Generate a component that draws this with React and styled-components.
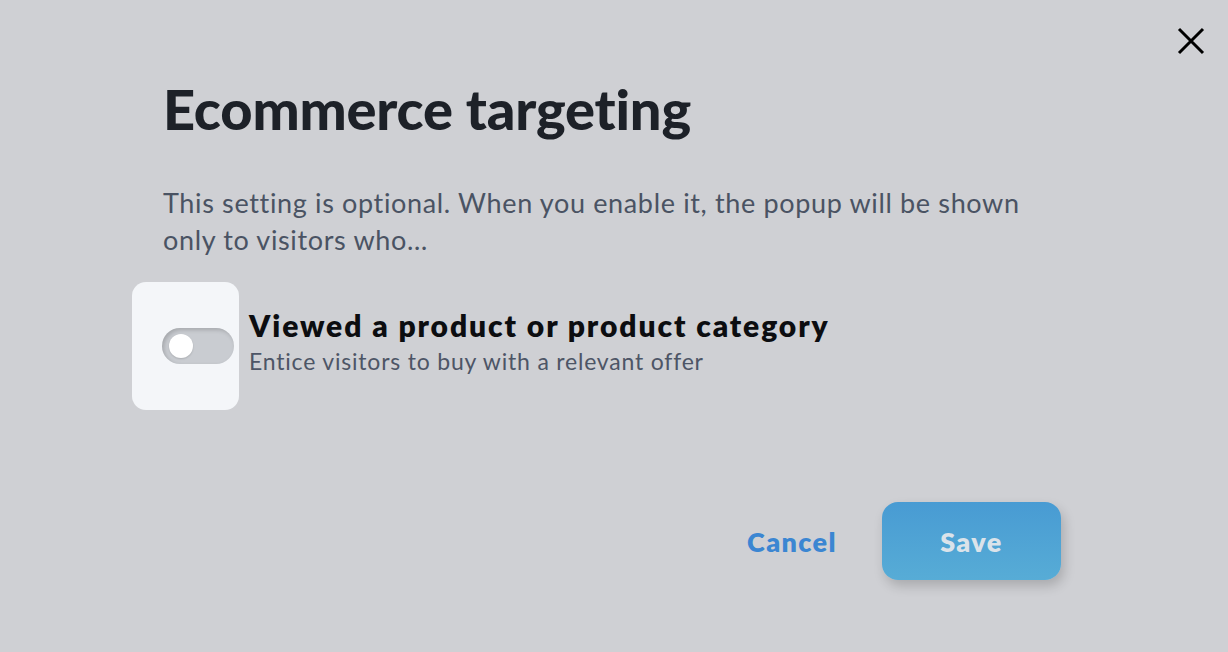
import React, { useState } from "react";
import styled, { createGlobalStyle } from "styled-components";

const GlobalStyle = createGlobalStyle`
  html, body {
    margin: 0;
    padding: 0;
    background: #cfd0d4;
  }
  * {
    box-sizing: border-box;
  }
`;

const Page = styled.div`
  position: relative;
  min-height: 652px;
  padding: 76px 167px 0 163px;
  font-family: Lato, "Open Sans", sans-serif;
  background: #cfd0d4;
`;

const CloseButton = styled.button`
  position: absolute;
  top: 24px;
  right: 20px;
  width: 34px;
  height: 34px;
  padding: 0;
  border: none;
  background: transparent;
  cursor: pointer;
  display: flex;
  align-items: center;
  justify-content: center;
`;

const Title = styled.h1`
  margin: 0;
  font-size: 56px;
  line-height: 66px;
  font-weight: 900;
  color: #1d2128;
  letter-spacing: -0.2px;
`;

const Description = styled.p`
  margin: 42px 0 0;
  max-width: 870px;
  font-size: 27px;
  line-height: 37px;
  letter-spacing: 0.65px;
  color: #4a5363;
`;

const OptionRow = styled.div`
  display: flex;
  align-items: center;
  margin: 24px 0 0 -31px;
`;

const ToggleCard = styled.div`
  width: 107px;
  height: 128px;
  flex-shrink: 0;
  border-radius: 14px;
  background: #f4f6f9;
  display: flex;
  align-items: center;
  padding-left: 30px;
`;

const Track = styled.button`
  position: relative;
  width: 72px;
  height: 36px;
  padding: 0;
  border: none;
  border-radius: 18px;
  background: ${(p) => (p.$on ? "#4a9bd4" : "#c9ccd1")};
  box-shadow: inset 2px 2px 4px rgba(0, 0, 0, 0.18);
  cursor: pointer;
`;

const Knob = styled.span`
  position: absolute;
  top: 6px;
  left: ${(p) => (p.$on ? "42px" : "7px")};
  width: 24px;
  height: 24px;
  border-radius: 50%;
  background: #ffffff;
  box-shadow: 0 1px 2px rgba(0, 0, 0, 0.15);
`;

const OptionText = styled.div`
  display: flex;
  flex-direction: column;
  margin-left: 10px;
  margin-top: -6px;
`;

const OptionTitle = styled.div`
  font-size: 30px;
  line-height: 36px;
  font-weight: 800;
  color: #0c0d10;
  letter-spacing: 1.9px;
`;

const OptionSub = styled.div`
  font-size: 23px;
  line-height: 36px;
  color: #4d5566;
  letter-spacing: 0.8px;
`;

const Footer = styled.div`
  display: flex;
  justify-content: flex-end;
  align-items: center;
  gap: 45px;
  margin-top: 92px;
`;

const TextButton = styled.button`
  border: none;
  background: transparent;
  padding: 0;
  font-family: inherit;
  font-size: 27px;
  font-weight: 800;
  letter-spacing: 1.4px;
  color: #3b86d2;
  cursor: pointer;
`;

const SaveButton = styled.button`
  width: 179px;
  height: 78px;
  border: none;
  border-radius: 16px;
  background: linear-gradient(180deg, #489bd3 0%, #57acd6 100%);
  box-shadow: 3px 6px 12px rgba(0, 0, 0, 0.18);
  font-family: inherit;
  font-size: 27px;
  font-weight: 800;
  letter-spacing: 1.4px;
  color: #dbe3ea;
  cursor: pointer;
`;

export default function App() {
  const [on, setOn] = useState(false);
  return (
    <>
      <GlobalStyle />
      <Page>
        <CloseButton aria-label="Close">
          <svg width="28" height="28" viewBox="0 0 28 28">
            <path d="M2 2 L26 26 M26 2 L2 26" stroke="#000" strokeWidth="3" strokeLinecap="butt" />
          </svg>
        </CloseButton>
        <Title>Ecommerce targeting</Title>
        <Description>
          This setting is optional. When you enable it, the popup will be shown only to visitors who…
        </Description>
        <OptionRow>
          <ToggleCard>
            <Track $on={on} onClick={() => setOn(!on)}>
              <Knob $on={on} />
            </Track>
          </ToggleCard>
          <OptionText>
            <OptionTitle>Viewed a product or product category</OptionTitle>
            <OptionSub>Entice visitors to buy with a relevant offer</OptionSub>
          </OptionText>
        </OptionRow>
        <Footer>
          <TextButton>Cancel</TextButton>
          <SaveButton>Save</SaveButton>
        </Footer>
      </Page>
    </>
  );
}
